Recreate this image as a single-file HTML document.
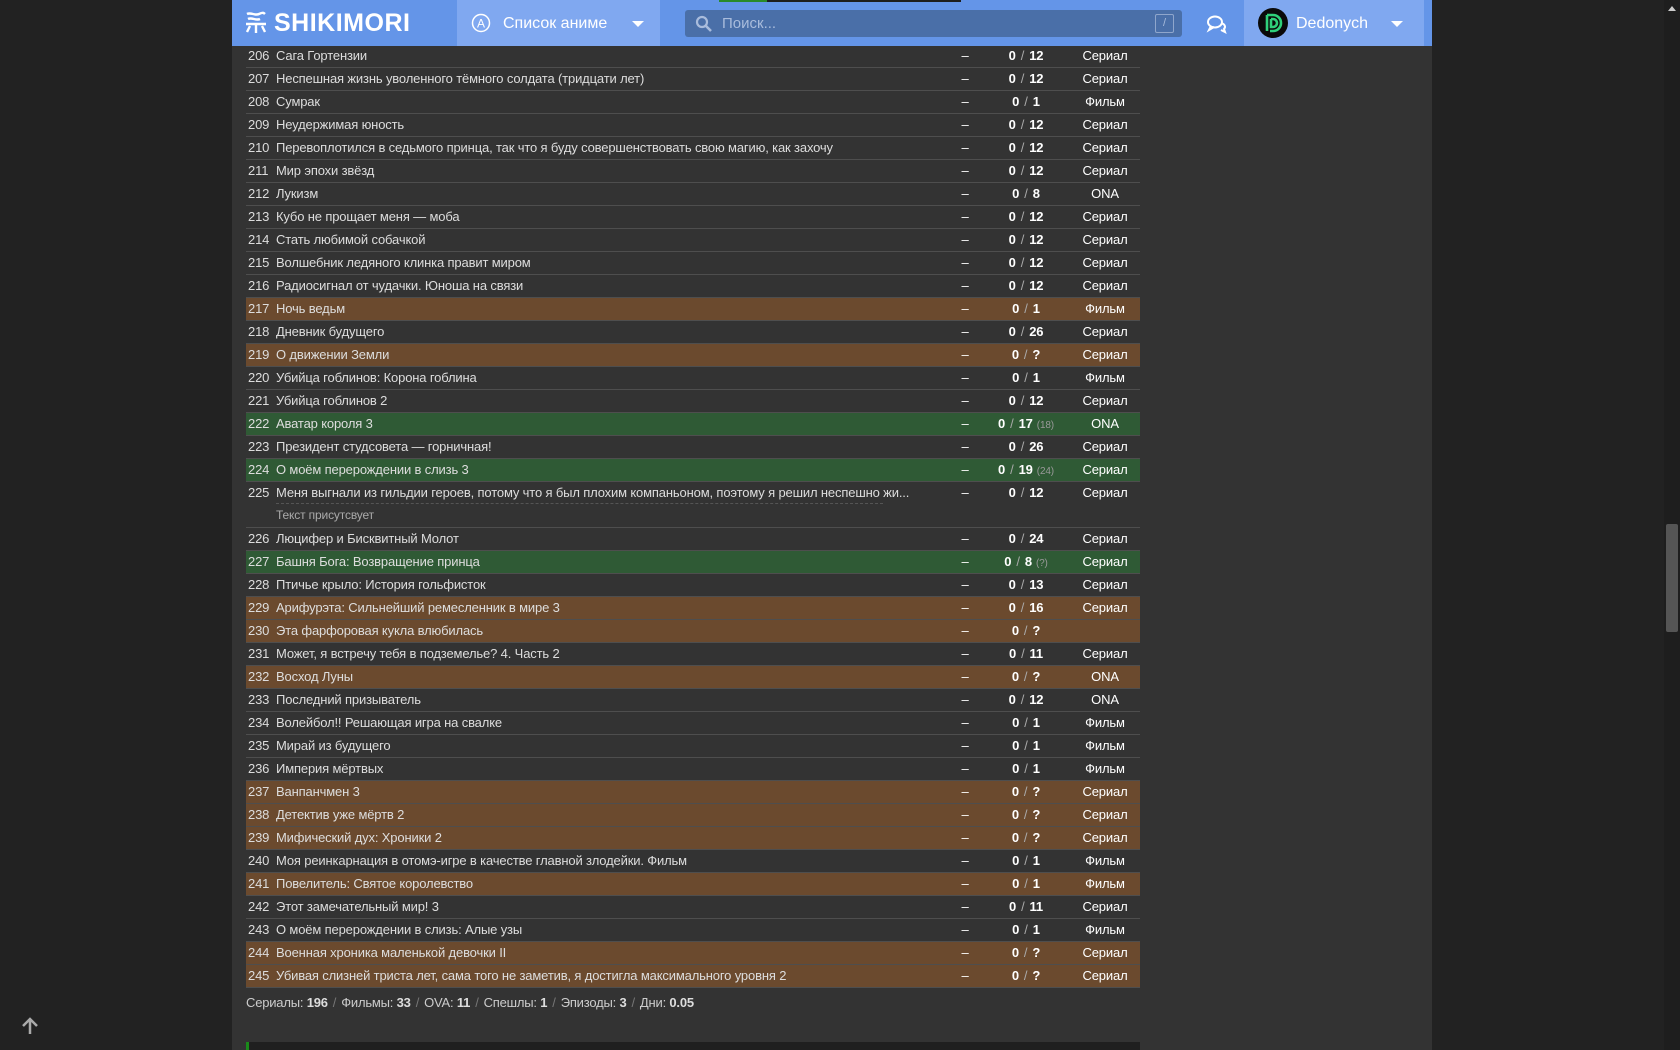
<!DOCTYPE html>
<html><head><meta charset="utf-8">
<style>
*{box-sizing:border-box;margin:0;padding:0}
html,body{width:1680px;height:1050px;overflow:hidden;background:#222;font-family:"Liberation Sans",Arial,sans-serif;color:#ddd}
#main{position:absolute;left:232px;top:0;width:1200px;height:1050px;background:#333}
#hdr{position:absolute;left:232px;top:0;width:1200px;height:46px;background:#6495e8}
.logo{position:absolute;left:12px;top:9px;color:#fff;font-weight:bold;font-size:25px;letter-spacing:0.5px}
.tab{position:absolute;left:225px;top:0;width:203px;height:46px;background:#80a8f0;color:#fff;font-size:16px}
.search{position:absolute;left:453px;top:10px;width:497px;height:27px;background:#4a6fa8;border-radius:3px;color:#a9bcdc;font-size:15px}
.user{position:absolute;left:1012px;top:0;width:180px;height:46px;background:#80a8f0;color:#fff;font-size:16px}
#rows{position:absolute;left:246px;top:45px;width:894px}
.r{position:relative;height:23px;border-bottom:1px solid #4e4e4e;font-size:13px;line-height:22px;letter-spacing:-0.15px;color:#ddd}
.r.b{background:#6b4a2e}
.r.g{background:#2f5a35}
.r .n{position:absolute;left:2px}
.r .t{position:absolute;left:30px;white-space:nowrap}
.r .d{position:absolute;left:713px;width:12px;text-align:center;color:#fff}
.r .e{position:absolute;left:730px;width:100px;text-align:center;color:#fff;font-weight:bold}
.r .e i{font-style:normal;font-weight:normal;color:#aaa;margin:0 5px}
.r .e s{text-decoration:none;font-weight:normal;color:#999;font-size:10px;margin-left:4px}
.r .k{position:absolute;left:830px;width:58px;text-align:center;color:#fff}
.r.dbl{height:46px}
.sub{position:absolute;left:30px;top:22px;font-size:12px;color:#aaa}
.dots{position:absolute;left:30px;top:21px;width:607px;border-top:1px dashed #555}
#stats{position:absolute;left:246px;top:995px;font-size:13px;color:#ccc;letter-spacing:-0.2px}
#stats b{color:#ddd}
#stats i{font-style:normal;color:#777;margin:0 5px}
</style></head><body>
<div id="main"></div>
<div id="hdr">
  <div class="logo"><svg width="24" height="24" viewBox="0 0 24 24" style="vertical-align:-3px;margin-right:6px"><path d="M3 4c4-2 8 2 12 0s5-1 6 0M4 9c4-2 8 2 12 0M2 14h20M12 14v9M6 16l-3 6M18 16l3 6" stroke="#fff" stroke-width="2.4" fill="none"/></svg>SHIKIMORI</div>
  <div style="position:absolute;left:487px;top:0;width:242px;height:2px;background:#1e1e1e"></div>
  <div style="position:absolute;left:487px;top:0;width:48px;height:2px;background:#2a8a2a"></div>
  <div class="tab"><svg width="20" height="20" viewBox="0 0 20 20" style="position:absolute;left:14px;top:13px"><circle cx="10" cy="10" r="8.5" stroke="#fff" stroke-width="1.5" fill="none"/><text x="10" y="14.5" font-size="12" fill="#fff" text-anchor="middle" font-family="Liberation Sans">A</text></svg><span style="position:absolute;left:46px;top:15px">Список аниме</span><span style="position:absolute;left:175px;top:21px;border-left:6px solid transparent;border-right:6px solid transparent;border-top:6px solid #fff"></span></div>
  <div class="search"><svg width="18" height="18" viewBox="0 0 18 18" style="position:absolute;left:10px;top:5px"><circle cx="7" cy="7" r="5" stroke="#a9bcdc" stroke-width="2.2" fill="none"/><path d="M11 11l5 5" stroke="#a9bcdc" stroke-width="2.6"/></svg><span style="position:absolute;left:37px;top:5px">Поиск...</span><span style="position:absolute;right:8px;top:4px;width:19px;height:19px;border:1px solid #8fa6cc;border-radius:2px;font-size:11px;text-align:center;line-height:17px;color:#a9bcdc">/</span></div>
  <svg width="24" height="20" viewBox="0 0 24 20" style="position:absolute;left:973px;top:14px"><ellipse cx="10" cy="8" rx="7" ry="5.5" stroke="#fff" stroke-width="2" fill="none"/><path d="M6 12l-2 4 5-3M16 9c4 1 5 4 3 6l1 3-4-2" stroke="#fff" stroke-width="2" fill="none"/></svg>
  <div class="user"><svg width="30" height="30" viewBox="0 0 30 30" style="position:absolute;left:14px;top:8px"><circle cx="15" cy="15" r="15" fill="#0a0a0a"/><path d="M9 7h6a8 8 0 0 1 0 16h-3M9 7v16M13 11h2a4 4 0 0 1 0 8h-2v-8" stroke="#2fd07a" stroke-width="2.6" fill="none"/></svg><span style="position:absolute;left:52px;top:15px">Dedonych</span><span style="position:absolute;left:147px;top:21px;border-left:6px solid transparent;border-right:6px solid transparent;border-top:6px solid #fff"></span></div>
</div>
<div id="rows">
<div class="r"><span class="n">206</span><span class="t">Сага Гортензии</span><span class="d">–</span><span class="e">0<i>/</i>12</span><span class="k">Сериал</span></div>
<div class="r"><span class="n">207</span><span class="t">Неспешная жизнь уволенного тёмного солдата (тридцати лет)</span><span class="d">–</span><span class="e">0<i>/</i>12</span><span class="k">Сериал</span></div>
<div class="r"><span class="n">208</span><span class="t">Сумрак</span><span class="d">–</span><span class="e">0<i>/</i>1</span><span class="k">Фильм</span></div>
<div class="r"><span class="n">209</span><span class="t">Неудержимая юность</span><span class="d">–</span><span class="e">0<i>/</i>12</span><span class="k">Сериал</span></div>
<div class="r"><span class="n">210</span><span class="t">Перевоплотился в седьмого принца, так что я буду совершенствовать свою магию, как захочу</span><span class="d">–</span><span class="e">0<i>/</i>12</span><span class="k">Сериал</span></div>
<div class="r"><span class="n">211</span><span class="t">Мир эпохи звёзд</span><span class="d">–</span><span class="e">0<i>/</i>12</span><span class="k">Сериал</span></div>
<div class="r"><span class="n">212</span><span class="t">Лукизм</span><span class="d">–</span><span class="e">0<i>/</i>8</span><span class="k">ONA</span></div>
<div class="r"><span class="n">213</span><span class="t">Кубо не прощает меня — моба</span><span class="d">–</span><span class="e">0<i>/</i>12</span><span class="k">Сериал</span></div>
<div class="r"><span class="n">214</span><span class="t">Стать любимой собачкой</span><span class="d">–</span><span class="e">0<i>/</i>12</span><span class="k">Сериал</span></div>
<div class="r"><span class="n">215</span><span class="t">Волшебник ледяного клинка правит миром</span><span class="d">–</span><span class="e">0<i>/</i>12</span><span class="k">Сериал</span></div>
<div class="r"><span class="n">216</span><span class="t">Радиосигнал от чудачки. Юноша на связи</span><span class="d">–</span><span class="e">0<i>/</i>12</span><span class="k">Сериал</span></div>
<div class="r b"><span class="n">217</span><span class="t">Ночь ведьм</span><span class="d">–</span><span class="e">0<i>/</i>1</span><span class="k">Фильм</span></div>
<div class="r"><span class="n">218</span><span class="t">Дневник будущего</span><span class="d">–</span><span class="e">0<i>/</i>26</span><span class="k">Сериал</span></div>
<div class="r b"><span class="n">219</span><span class="t">О движении Земли</span><span class="d">–</span><span class="e">0<i>/</i>?</span><span class="k">Сериал</span></div>
<div class="r"><span class="n">220</span><span class="t">Убийца гоблинов: Корона гоблина</span><span class="d">–</span><span class="e">0<i>/</i>1</span><span class="k">Фильм</span></div>
<div class="r"><span class="n">221</span><span class="t">Убийца гоблинов 2</span><span class="d">–</span><span class="e">0<i>/</i>12</span><span class="k">Сериал</span></div>
<div class="r g"><span class="n">222</span><span class="t">Аватар короля 3</span><span class="d">–</span><span class="e">0<i>/</i>17<s>(18)</s></span><span class="k">ONA</span></div>
<div class="r"><span class="n">223</span><span class="t">Президент студсовета — горничная!</span><span class="d">–</span><span class="e">0<i>/</i>26</span><span class="k">Сериал</span></div>
<div class="r g"><span class="n">224</span><span class="t">О моём перерождении в слизь 3</span><span class="d">–</span><span class="e">0<i>/</i>19<s>(24)</s></span><span class="k">Сериал</span></div>
<div class="r dbl"><span class="n">225</span><span class="t">Меня выгнали из гильдии героев, потому что я был плохим компаньоном, поэтому я решил неспешно жи...</span><span class="dots"></span><span class="sub">Текст присутсвует</span><span class="d">–</span><span class="e">0<i>/</i>12</span><span class="k">Сериал</span></div>
<div class="r"><span class="n">226</span><span class="t">Люцифер и Бисквитный Молот</span><span class="d">–</span><span class="e">0<i>/</i>24</span><span class="k">Сериал</span></div>
<div class="r g"><span class="n">227</span><span class="t">Башня Бога: Возвращение принца</span><span class="d">–</span><span class="e">0<i>/</i>8<s>(?)</s></span><span class="k">Сериал</span></div>
<div class="r"><span class="n">228</span><span class="t">Птичье крыло: История гольфисток</span><span class="d">–</span><span class="e">0<i>/</i>13</span><span class="k">Сериал</span></div>
<div class="r b"><span class="n">229</span><span class="t">Арифурэта: Сильнейший ремесленник в мире 3</span><span class="d">–</span><span class="e">0<i>/</i>16</span><span class="k">Сериал</span></div>
<div class="r b"><span class="n">230</span><span class="t">Эта фарфоровая кукла влюбилась</span><span class="d">–</span><span class="e">0<i>/</i>?</span><span class="k"></span></div>
<div class="r"><span class="n">231</span><span class="t">Может, я встречу тебя в подземелье? 4. Часть 2</span><span class="d">–</span><span class="e">0<i>/</i>11</span><span class="k">Сериал</span></div>
<div class="r b"><span class="n">232</span><span class="t">Восход Луны</span><span class="d">–</span><span class="e">0<i>/</i>?</span><span class="k">ONA</span></div>
<div class="r"><span class="n">233</span><span class="t">Последний призыватель</span><span class="d">–</span><span class="e">0<i>/</i>12</span><span class="k">ONA</span></div>
<div class="r"><span class="n">234</span><span class="t">Волейбол!! Решающая игра на свалке</span><span class="d">–</span><span class="e">0<i>/</i>1</span><span class="k">Фильм</span></div>
<div class="r"><span class="n">235</span><span class="t">Мирай из будущего</span><span class="d">–</span><span class="e">0<i>/</i>1</span><span class="k">Фильм</span></div>
<div class="r"><span class="n">236</span><span class="t">Империя мёртвых</span><span class="d">–</span><span class="e">0<i>/</i>1</span><span class="k">Фильм</span></div>
<div class="r b"><span class="n">237</span><span class="t">Ванпанчмен 3</span><span class="d">–</span><span class="e">0<i>/</i>?</span><span class="k">Сериал</span></div>
<div class="r b"><span class="n">238</span><span class="t">Детектив уже мёртв 2</span><span class="d">–</span><span class="e">0<i>/</i>?</span><span class="k">Сериал</span></div>
<div class="r b"><span class="n">239</span><span class="t">Мифический дух: Хроники 2</span><span class="d">–</span><span class="e">0<i>/</i>?</span><span class="k">Сериал</span></div>
<div class="r"><span class="n">240</span><span class="t">Моя реинкарнация в отомэ-игре в качестве главной злодейки. Фильм</span><span class="d">–</span><span class="e">0<i>/</i>1</span><span class="k">Фильм</span></div>
<div class="r b"><span class="n">241</span><span class="t">Повелитель: Святое королевство</span><span class="d">–</span><span class="e">0<i>/</i>1</span><span class="k">Фильм</span></div>
<div class="r"><span class="n">242</span><span class="t">Этот замечательный мир! 3</span><span class="d">–</span><span class="e">0<i>/</i>11</span><span class="k">Сериал</span></div>
<div class="r"><span class="n">243</span><span class="t">О моём перерождении в слизь: Алые узы</span><span class="d">–</span><span class="e">0<i>/</i>1</span><span class="k">Фильм</span></div>
<div class="r b"><span class="n">244</span><span class="t">Военная хроника маленькой девочки II</span><span class="d">–</span><span class="e">0<i>/</i>?</span><span class="k">Сериал</span></div>
<div class="r b"><span class="n">245</span><span class="t">Убивая слизней триста лет, сама того не заметив, я достигла максимального уровня 2</span><span class="d">–</span><span class="e">0<i>/</i>?</span><span class="k">Сериал</span></div>
</div>
<div id="stats">Сериалы: <b>196</b><i>/</i>Фильмы: <b>33</b><i>/</i>OVA: <b>11</b><i>/</i>Спешлы: <b>1</b><i>/</i>Эпизоды: <b>3</b><i>/</i>Дни: <b>0.05</b></div>
<div style="position:absolute;left:246px;top:1042px;width:894px;height:8px;background:#1f1f1f"></div>
<div style="position:absolute;left:246px;top:1042px;width:3px;height:8px;background:#1a8a1a"></div>
<svg width="20" height="20" viewBox="0 0 20 20" style="position:absolute;left:20px;top:1016px"><path d="M10 18V3M3 10l7-7 7 7" stroke="#aaa" stroke-width="2.5" fill="none"/></svg>
<div style="position:absolute;left:1664px;top:0;width:16px;height:1050px;background:#1e1e1e"></div>
<div style="position:absolute;left:1666px;top:524px;width:12px;height:108px;background:#555;border-radius:2px"></div>
<div style="position:absolute;left:1668px;top:6px;border-left:4px solid transparent;border-right:4px solid transparent;border-bottom:5px solid #ccc"></div>
</body></html>
